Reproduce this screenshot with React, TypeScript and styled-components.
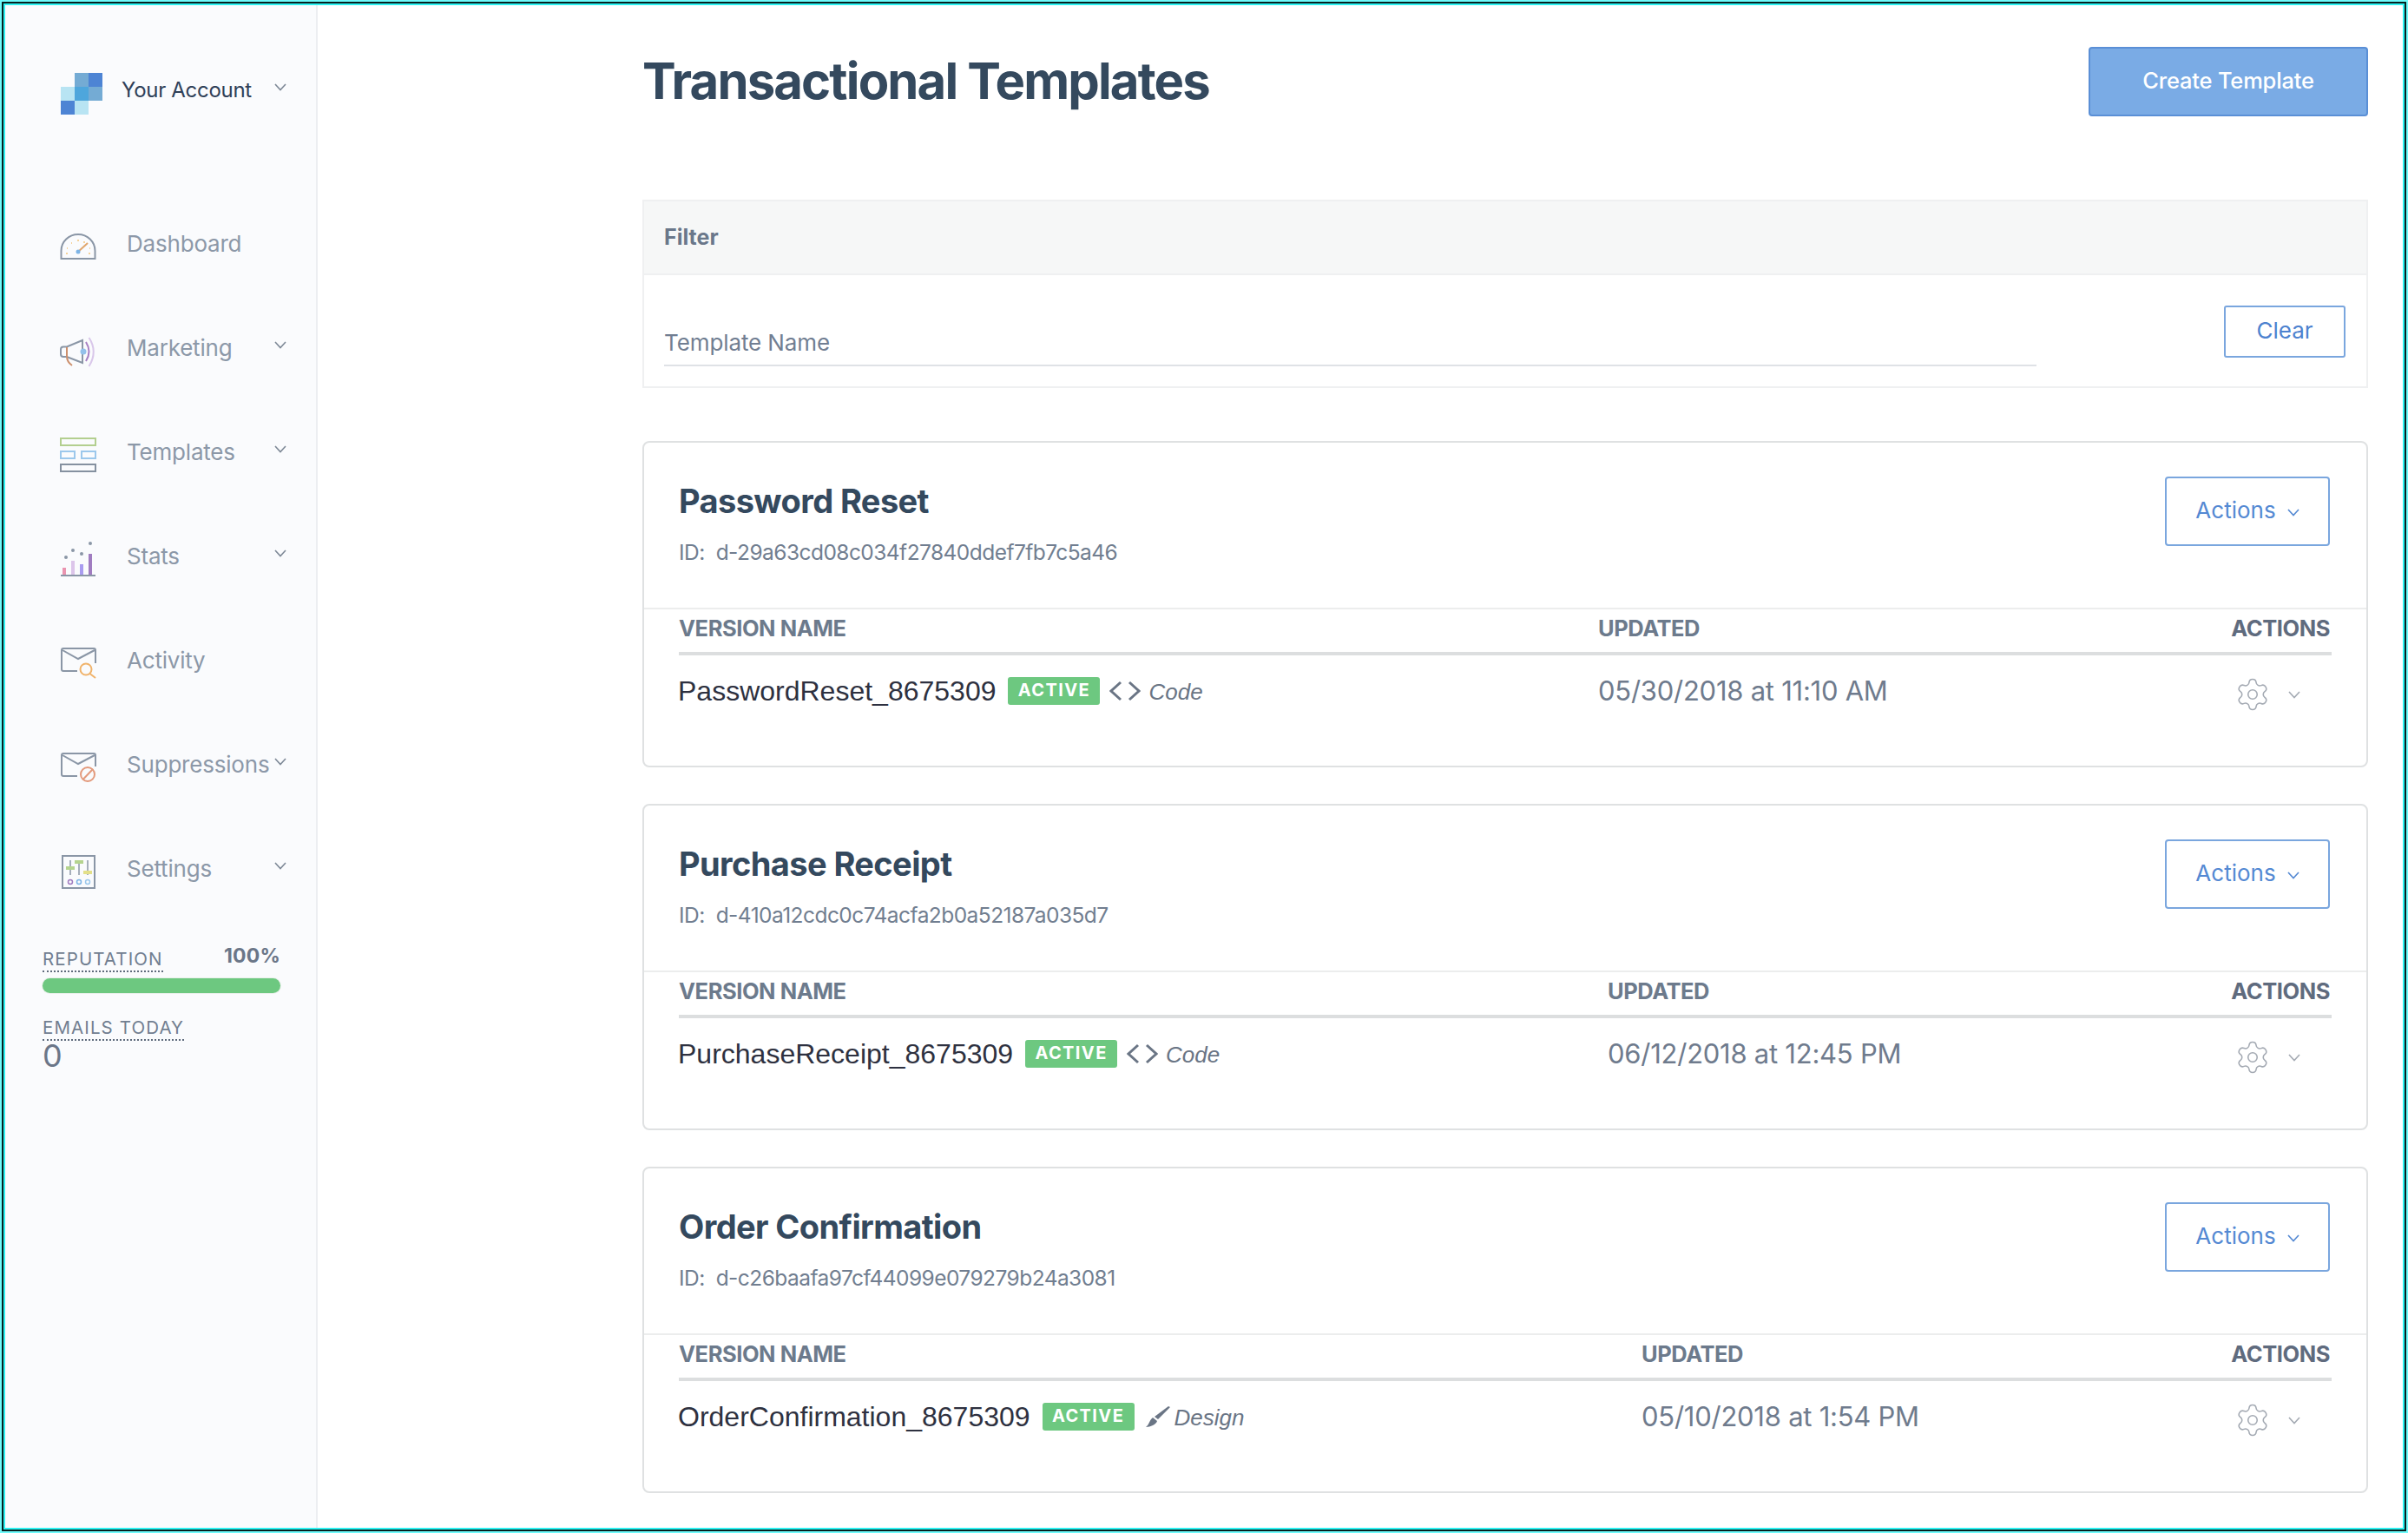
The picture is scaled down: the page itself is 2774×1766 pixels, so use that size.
import React from 'react';
import styled, { createGlobalStyle } from 'styled-components';
import { Settings as Gear } from 'lucide-react';

const Global = createGlobalStyle`
  html, body { margin: 0; padding: 0; background: #fff; }
  * { box-sizing: border-box; }
  body { font-family: Inter, "Liberation Sans", sans-serif; }
`;

const Frame = styled.div`
  width: 2774px; height: 1766px; padding: 6px; overflow: hidden; display: flex; position: relative;
  &::after { content: ''; position: absolute; inset: 0; pointer-events: none;
    box-shadow: inset 0 0 0 2px #6ffafa, inset 0 0 0 4px #07201f, inset 0 0 0 6px #2cf2f2; }
`;
const Sidebar = styled.aside`
  width: 360px; flex: none; background: #fafbfd; border-right: 2px solid #eceef1; display: flex; flex-direction: column;
`;
const Account = styled.div`
  display: flex; align-items: flex-start; height: 215px; padding: 78px 0 0 64px;
`;
const Logo = styled.div`
  width: 48px; height: 48px; display: grid; grid-template-columns: repeat(3, 16px); grid-auto-rows: 16px; flex: none;
`;
const Cell = styled.span<{ $c?: string }>`background: ${p => p.$c || 'transparent'};`;
const AccountName = styled.span`
  margin: 4px 0 0 22px; width: 176px; font-size: 24px; line-height: 32px; color: #2f4058; letter-spacing: -0.3px;
`;
const Chev = styled.svg<{ $top?: number }>`
  width: 14px; height: 9px; flex: none; fill: none; stroke: currentColor; stroke-width: 1.6px;
  margin-top: ${p => p.$top ?? 0}px;
`;
const AccountChev = styled.span`display: block; color: #7d8896; margin-top: 12px; line-height: 0;`;
const Nav = styled.nav`display: flex; flex-direction: column;`;
const NavItem = styled.div`
  height: 120px; display: flex; align-items: center; padding-left: 63px; color: #8c98a8;
`;
const NavIcon = styled.svg`width: 44px; height: 44px; flex: none; fill: none; overflow: visible;`;
const NavLabel = styled.span`
  width: 170px; margin-left: 33px; font-size: 26px; line-height: 36px; color: #8c98a8; letter-spacing: -0.2px; white-space: nowrap;
`;
const NavChev = styled.span`display: block; color: #7d8896; line-height: 0; margin-top: -7px;`;
const Stats = styled.div`padding: 0 0 0 43px; width: 318px; margin-top: 21px;`;
const StatTop = styled.div`display: flex; justify-content: space-between; align-items: flex-end; height: 38px;`;
const StatLabel = styled.span`
  font-size: 20.5px; line-height: 24px; letter-spacing: 1.1px; color: #717e90; border-bottom: 2px dotted #5f6b7c; display: inline-block; height: 27px;
`;
const Pct = styled.span`font-size: 23px; line-height: 30px; font-weight: 700; color: #6b7688; letter-spacing: 0.2px; margin: 0 1px 4px 0;`;
const Track = styled.div`
  width: 274px; height: 17px; margin-top: 7px; border-radius: 9px; background: #6dc880; box-shadow: 0 0 0 1px #e8f0ea;
`;
const EmailBlock = styled.div`margin-top: 28px;`;
const Zero = styled.div`font-size: 36px; line-height: 34px; color: #6b7688; margin-top: 0;`;

const Main = styled.main`flex: 1; min-width: 0; padding: 48px 40px 0 374px;`;
const Header = styled.header`display: flex; justify-content: space-between; align-items: center; margin-bottom: 96px;`;
const Title = styled.h1`
  margin: 0; padding-bottom: 2px; height: 80px; font-size: 58px; line-height: 78px; font-weight: 700; color: #34495e; letter-spacing: -1.85px;
`;
const PrimaryBtn = styled.button`
  width: 322px; height: 80px; border: 2px solid #5a8fd6; border-radius: 4px; background: #7aabe5; color: #fff;
  font: 500 25.5px/1 Inter, sans-serif; letter-spacing: -0.2px; padding: 0 0 3px;
`;
const Filter = styled.section`border: 2px solid #eff0f1; height: 217px; margin-bottom: 61px;`;
const FilterHead = styled.div`
  height: 85px; background: #f6f7f7; border-bottom: 2px solid #eff0f1; padding-left: 23px;
  font-size: 25px; font-weight: 700; line-height: 83px; color: #6a778a; letter-spacing: 0;
`;
const FilterBody = styled.div`display: flex; justify-content: space-between; align-items: flex-start; padding: 35px 24px 0 23px;`;
const Field = styled.div`
  width: 1581px; margin-top: 27px; height: 43px; border-bottom: 2px solid #dfe2e6; font-size: 26px; line-height: 32px; color: #717e92; letter-spacing: -0.1px;
`;
const ClearBtn = styled.button`
  width: 140px; height: 60px; border: 2px solid #7aa6de; border-radius: 3px; background: #fff; color: #4d82cf;
  font: 400 26px/1 Inter, sans-serif; padding: 0 0 3px;
`;
const Cards = styled.div`display: flex; flex-direction: column; gap: 42px;`;
const Card = styled.article`height: 376px; border: 2px solid #dfe1e2; border-radius: 8px;`;
const CardHead = styled.div`
  height: 192px; border-bottom: 2px solid #eceded; display: flex; justify-content: space-between; align-items: flex-start; padding: 39px 42px 0 40px;
`;
const CardTitle = styled.h2`
  margin: 6px 0 0; font-size: 38px; line-height: 44px; font-weight: 700; color: #34495e; letter-spacing: -0.6px;
`;
const IdLine = styled.div`
  margin-top: 21px; font-size: 24.5px; line-height: 32px; color: #717e90; display: flex; letter-spacing: -0.55px;
`;
const IdValue = styled.span`margin-left: 13px;`;
const ActionsBtn = styled.button`
  width: 190px; height: 80px; border: 2px solid #7aa6de; border-radius: 4px; background: #fff; color: #5489d3;
  font: 400 26px/1 Inter, sans-serif; display: flex; align-items: center; justify-content: center; gap: 13px; padding: 0 0 3px;
`;
const Columns = styled.div<{ $first: number }>`
  display: grid; grid-template-columns: ${p => p.$first}px 1fr 220px; margin: 0 40px;
`;
const TableHead = styled(Columns)`
  height: 53px; border-bottom: 4px solid #dcdedf; align-items: center; padding-bottom: 5px;
  font-size: 25.5px; line-height: 30px; font-weight: 700; color: #6c7a8c; letter-spacing: -0.45px;
`;
const ActionsHead = styled.span`text-align: right; padding-right: 2px; color: #5f6b7e;`;
const Row = styled(Columns)`height: 81px; align-items: center;`;
const NameCell = styled.div`display: flex; align-items: center; margin-left: -1px;`;
const Name = styled.span`font: 400 32px/36px "Liberation Sans", Arial, sans-serif; color: #2e3140; letter-spacing: 0;`;
const Badge = styled.span`
  margin-left: 14px; width: 106px; height: 32px; background: #6dc880; border-radius: 3px; color: #fff; text-align: center;
  font-size: 20px; line-height: 30px; font-weight: 700; letter-spacing: 1.4px;
`;
const CodeIcon = styled.svg`margin-left: 11px; width: 36px; height: 24px; fill: none; stroke: #6a7585; stroke-width: 3px; flex: none;`;
const BrushIcon = styled.svg`margin-left: 13px; width: 28px; height: 24px; fill: #6a7585; flex: none;`;
const Kind = styled.span<{ $gap: number }>`
  margin-left: ${p => p.$gap}px; font: italic 400 26px/36px "Liberation Sans", Arial, sans-serif; color: #6a7585; padding-top: 3px;
`;
const DateCell = styled.span`font-size: 31px; line-height: 36px; color: #6f7b8d; letter-spacing: -0.25px;`;
const RowActions = styled.div`display: flex; align-items: center; justify-content: flex-end; padding: 9px 36px 0 0; color: #a4aab3; gap: 20px;`;

const Chevron = ({ top }: { top?: number }) => (
  <Chev $top={top} viewBox="0 0 14 9"><polyline points="1,1 7,7.5 13,1" /></Chev>
);

const G = '#8a96a6';
const icons: Record<string, React.ReactNode> = {
  Dashboard: (
    <g transform="translate(0,10)">
      <path d="M1.5 29V20A19.5 19 0 0 1 40.5 20V29Z" stroke={G} strokeWidth="2" />
      <path d="M21 21 32 11" stroke="#e0a66d" strokeWidth="2" />
      <circle cx="21" cy="21" r="2.5" fill="#7db4e6" />
      <path d="M7 23h2M8 17h1M13 11h1M20 8h2M27 10h2M33 23h2M34 17h1" stroke="#f5d29a" strokeWidth="2" />
    </g>
  ),
  Marketing: (
    <g transform="translate(0,9)">
      <path d="M26 4 8 11.5H4Q1 11.5 1 14.5V20Q1 23 4 23H8L26 30Z" stroke={G} strokeWidth="2" />
      <path d="M8 12v10Q8 29 14 33" stroke="#cc8f6c" strokeWidth="2" />
      <circle cx="27" cy="17" r="3.5" fill="#93c0ea" />
      <path d="M30 6Q37 17 30 28" stroke="#a77fc3" strokeWidth="2" />
      <path d="M33.500 1Q44 17 33.500 34" stroke="#d9c7ea" strokeWidth="2" />
    </g>
  ),
  Templates: (
    <g transform="translate(0,5)">
      <rect x="1" y="1" width="40" height="8" stroke="#b3cf8f" strokeWidth="2" />
      <rect x="1" y="16" width="16" height="8" stroke="#9cc8ec" strokeWidth="2" />
      <rect x="25" y="16" width="16" height="8" stroke="#9cc8ec" strokeWidth="2" />
      <rect x="1" y="31" width="40" height="8" stroke="#8591a0" strokeWidth="2" />
    </g>
  ),
  Stats: (
    <g transform="translate(1,5)">
      <path d="M0 39H40" stroke={G} strokeWidth="2" />
      <rect x="2" y="30" width="4" height="8" fill="#ea94b0" />
      <rect x="12" y="22" width="4" height="16" fill="#dcc5ea" />
      <rect x="22" y="26" width="4" height="12" fill="#a99cf0" />
      <rect x="32" y="14" width="4" height="24" fill="#a07cc0" />
      <circle cx="6" cy="18" r="2" fill={G} /><circle cx="14" cy="10" r="2" fill={G} />
      <circle cx="24" cy="14" r="2" fill={G} /><circle cx="34" cy="2" r="2" fill={G} />
    </g>
  ),
  Activity: (
    <g transform="translate(1,7)">
      <path d="M19 27H3Q1 27 1 25V3Q1 1 3 1H38Q40 1 40 3V18" stroke={G} strokeWidth="2" />
      <path d="M2 3 20 13 39 3" stroke={G} strokeWidth="2" />
      <circle cx="29" cy="25" r="6.500" stroke="#f0b36b" strokeWidth="2" />
      <path d="M33.500 30 40 35" stroke="#f0b36b" strokeWidth="2" />
    </g>
  ),
  Suppressions: (
    <g transform="translate(1,8)">
      <path d="M19 27H3Q1 27 1 25V3Q1 1 3 1H38Q40 1 40 3V16" stroke={G} strokeWidth="2" />
      <path d="M2 3 20 13 39 3" stroke={G} strokeWidth="2" />
      <circle cx="31" cy="25" r="8" stroke="#e39a7c" strokeWidth="2" />
      <path d="M25.500 31 37 19" stroke="#e39a7c" strokeWidth="2" />
    </g>
  ),
  Settings: (
    <g transform="translate(2,6)">
      <rect x="1" y="1" width="37" height="37" stroke={G} strokeWidth="2" />
      <path d="M10 6V23M20 6V23M30 6V23" stroke={G} strokeWidth="1.500" />
      <rect x="5" y="13" width="10" height="4" fill="#b5d48f" />
      <rect x="15" y="6" width="10" height="4" fill="#b5d48f" />
      <rect x="25" y="18" width="10" height="4" fill="#e3e08a" />
      <circle cx="10" cy="31" r="2.500" stroke="#a07cc0" strokeWidth="1.500" />
      <circle cx="20" cy="31" r="2.500" stroke="#7db4e6" strokeWidth="1.500" />
      <circle cx="30" cy="31" r="2.500" stroke="#9cc8ec" strokeWidth="1.500" />
    </g>
  ),
};

const navItems = [
  { label: 'Dashboard', chev: false },
  { label: 'Marketing', chev: true },
  { label: 'Templates', chev: true },
  { label: 'Stats', chev: true },
  { label: 'Activity', chev: false },
  { label: 'Suppressions', chev: true },
  { label: 'Settings', chev: true },
];

const logo = ['', '#74abd4', '#4d84d4', '#b8e4f3', '#4ea6dc', '#74abd4', '#4d84d4', '#b8e4f3', ''];

const cards = [
  { title: 'Password Reset', id: 'd-29a63cd08c034f27840ddef7fb7c5a46', version: 'PasswordReset_8675309', kind: 'Code', date: '05/30/2018 at 11:10 AM', col: 1059 },
  { title: 'Purchase Receipt', id: 'd-410a12cdc0c74acfa2b0a52187a035d7', version: 'PurchaseReceipt_8675309', kind: 'Code', date: '06/12/2018 at 12:45 PM', col: 1070 },
  { title: 'Order Confirmation', id: 'd-c26baafa97cf44099e079279b24a3081', version: 'OrderConfirmation_8675309', kind: 'Design', date: '05/10/2018 at 1:54 PM', col: 1109 },
];

export default function App() {
  return (
    <Frame>
      <Global />
      <Sidebar>
        <Account>
          <Logo>{logo.map((c, i) => <Cell key={i} $c={c} />)}</Logo>
          <AccountName>Your Account</AccountName>
          <AccountChev><Chevron /></AccountChev>
        </Account>
        <Nav>
          {navItems.map(n => (
            <NavItem key={n.label}>
              <NavIcon viewBox="0 0 44 44">{icons[n.label]}</NavIcon>
              <NavLabel>{n.label}</NavLabel>
              {n.chev && <NavChev><Chevron /></NavChev>}
            </NavItem>
          ))}
        </Nav>
        <Stats>
          <StatTop>
            <StatLabel>REPUTATION</StatLabel>
            <Pct>100%</Pct>
          </StatTop>
          <Track />
          <EmailBlock>
            <StatLabel>EMAILS TODAY</StatLabel>
            <Zero>0</Zero>
          </EmailBlock>
        </Stats>
      </Sidebar>
      <Main>
        <Header>
          <Title>Transactional Templates</Title>
          <PrimaryBtn>Create Template</PrimaryBtn>
        </Header>
        <Filter>
          <FilterHead>Filter</FilterHead>
          <FilterBody>
            <Field>Template Name</Field>
            <ClearBtn>Clear</ClearBtn>
          </FilterBody>
        </Filter>
        <Cards>
          {cards.map(c => (
            <Card key={c.title}>
              <CardHead>
                <div>
                  <CardTitle>{c.title}</CardTitle>
                  <IdLine>ID:<IdValue>{c.id}</IdValue></IdLine>
                </div>
                <ActionsBtn>Actions<Chevron top={6} /></ActionsBtn>
              </CardHead>
              <TableHead $first={c.col}>
                <span>VERSION NAME</span>
                <span>UPDATED</span>
                <ActionsHead>ACTIONS</ActionsHead>
              </TableHead>
              <Row $first={c.col}>
                <NameCell>
                  <Name>{c.version}</Name>
                  <Badge>ACTIVE</Badge>
                  {c.kind === 'Code' ? (
                    <CodeIcon viewBox="0 0 36 24"><path d="M13 2 2 12 13 22M23 2 34 12 23 22" /></CodeIcon>
                  ) : (
                    <BrushIcon viewBox="0 0 28 24"><path d="M26 0 28 1 14 15 10 12ZM8 13 13 17C12 21 5 24 0 24 4 21 4 16 8 13Z" /></BrushIcon>
                  )}
                  <Kind $gap={c.kind === 'Code' ? 9 : 5}>{c.kind}</Kind>
                </NameCell>
                <DateCell>{c.date}</DateCell>
                <RowActions><Gear size={42} strokeWidth={0.9} /><Chevron /></RowActions>
              </Row>
            </Card>
          ))}
        </Cards>
      </Main>
    </Frame>
  );
}
